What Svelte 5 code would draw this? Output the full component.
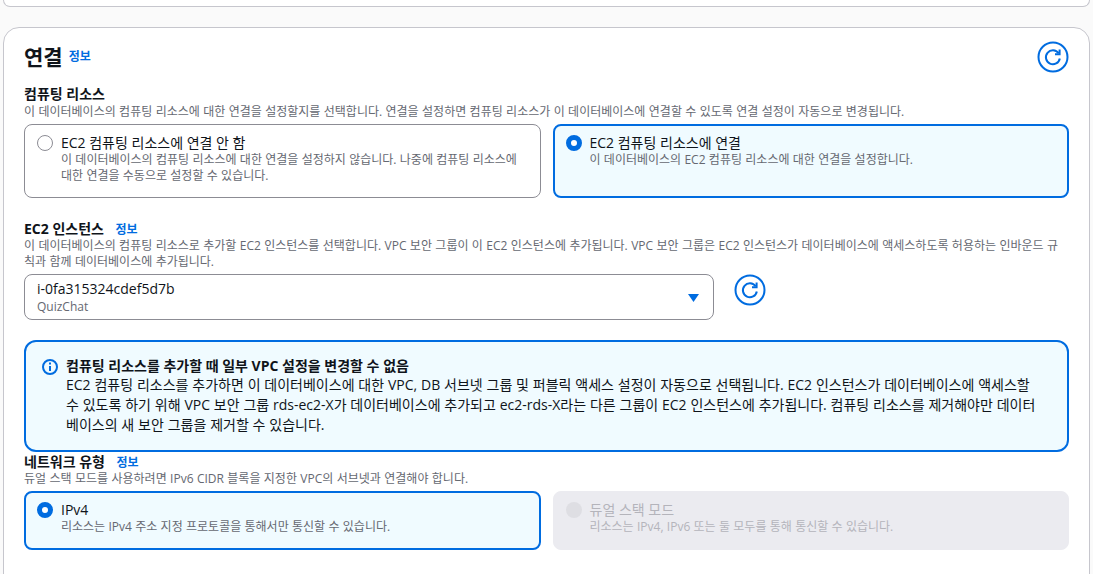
<script lang="ts">
  const computeOptions = [
    {
      label: 'EC2 컴퓨팅 리소스에 연결 안 함',
      desc: '이 데이터베이스의 컴퓨팅 리소스에 대한 연결을 설정하지 않습니다. 나중에 컴퓨팅 리소스에 대한 연결을 수동으로 설정할 수 있습니다.',
      checked: false,
      disabled: false
    },
    {
      label: 'EC2 컴퓨팅 리소스에 연결',
      desc: '이 데이터베이스의 EC2 컴퓨팅 리소스에 대한 연결을 설정합니다.',
      checked: true,
      disabled: false
    }
  ];

  const networkOptions = [
    {
      label: 'IPv4',
      desc: '리소스는 IPv4 주소 지정 프로토콜을 통해서만 통신할 수 있습니다.',
      checked: true,
      disabled: false
    },
    {
      label: '듀얼 스택 모드',
      desc: '리소스는 IPv4, IPv6 또는 둘 모두를 통해 통신할 수 있습니다.',
      checked: false,
      disabled: true
    }
  ];
</script>

{#snippet refresh()}
  <button type="button" class="refresh" aria-label="새로 고침">
    <svg viewBox="0 0 32 32" width="32" height="32" fill="none" stroke="#006ce0" stroke-width="2">
      <circle cx="16" cy="16" r="14.5" />
      <path d="M21.6 12.2a7 7 0 1 0 1.2 5.3" />
      <path d="M22.6 8.6v4.6h-4.6" />
    </svg>
  </button>
{/snippet}

{#snippet tiles(options)}
  <div class="tiles">
    {#each options as opt (opt.label)}
      <div class="tile" class:checked={opt.checked} class:disabled={opt.disabled}>
        <span class="radio"></span>
        <div class="tile-text">
          <div class="tile-label">{opt.label}</div>
          <div class="tile-desc">{opt.desc}</div>
        </div>
      </div>
    {/each}
  </div>
{/snippet}

<div class="page">
  <div class="prev-card"></div>

  <section class="card">
    <header class="card-head">
      <h2>연결</h2>
      <a class="info" href="#top">정보</a>
      <div class="spacer"></div>
      {@render refresh()}
    </header>

    <div class="field compute">
      <div class="field-label">컴퓨팅 리소스</div>
      <div class="field-desc">이 데이터베이스의 컴퓨팅 리소스에 대한 연결을 설정할지를 선택합니다. 연결을 설정하면 컴퓨팅 리소스가 이 데이터베이스에 연결할 수 있도록 연결 설정이 자동으로 변경됩니다.</div>
      {@render tiles(computeOptions)}
    </div>

    <div class="field instance">
      <div class="field-label">EC2 인스턴스 <a class="info gap" href="#top">정보</a></div>
      <div class="field-desc">이 데이터베이스의 컴퓨팅 리소스로 추가할 EC2 인스턴스를 선택합니다. VPC 보안 그룹이 이 EC2 인스턴스에 추가됩니다. VPC 보안 그룹은 EC2 인스턴스가 데이터베이스에 액세스하도록 허용하는 인바운드 규칙과 함께 데이터베이스에 추가됩니다.</div>
      <div class="select-row">
        <div class="select">
          <div class="select-value">
            <div class="select-id">i-0fa315324cdef5d7b</div>
            <div class="select-name">QuizChat</div>
          </div>
          <svg class="caret" viewBox="0 0 11 8" width="11" height="8"><path d="M0 0h11L5.5 8z" fill="#006ce0" /></svg>
        </div>
        {@render refresh()}
      </div>
    </div>

    <div class="alert">
      <svg class="alert-icon" viewBox="0 0 16 16" width="16" height="16" fill="none" stroke="#006ce0" stroke-width="2">
        <circle cx="8" cy="8" r="7" />
        <path d="M8 7v5" />
        <path d="M8 3.6v2" />
      </svg>
      <div class="alert-body">
        <div class="alert-title">컴퓨팅 리소스를 추가할 때 일부 VPC 설정을 변경할 수 없음</div>
        <div class="alert-text">EC2 컴퓨팅 리소스를 추가하면 이 데이터베이스에 대한 VPC, DB 서브넷 그룹 및 퍼블릭 액세스 설정이 자동으로 선택됩니다. EC2 인스턴스가 데이터베이스에 액세스할 수 있도록 하기 위해 VPC 보안 그룹 rds-ec2-X가 데이터베이스에 추가되고 ec2-rds-X라는 다른 그룹이 EC2 인스턴스에 추가됩니다. 컴퓨팅 리소스를 제거해야만 데이터베이스의 새 보안 그룹을 제거할 수 있습니다.</div>
      </div>
    </div>

    <div class="field network">
      <div class="field-label">네트워크 유형 <a class="info gap" href="#top">정보</a></div>
      <div class="field-desc">듀얼 스택 모드를 사용하려면 IPv6 CIDR 블록을 지정한 VPC의 서브넷과 연결해야 합니다.</div>
      {@render tiles(networkOptions)}
    </div>
  </section>
</div>

<style>
  :global(body) {
    margin: 0;
    background: #fafafa;
  }

  .page {
    height: 574px;
    overflow: hidden;
    padding: 0 3px;
    box-sizing: border-box;
    font-family: 'Open Sans', 'Noto Sans CJK KR', sans-serif;
    font-size: 14px;
    line-height: 20px;
    color: #0f141a;
  }

  .prev-card {
    height: 6px;
    border: 1px solid #c6c6cd;
    border-top: 0;
    border-radius: 0 0 16px 16px;
    background: #fff;
  }

  .card {
    margin-top: 20px;
    padding: 12px 20px 60px;
    border: 1px solid #c6c6cd;
    border-radius: 16px;
    background: #fff;
  }

  .card-head {
    display: flex;
    align-items: center;
    height: 34px;
    margin-bottom: 10px;
  }

  h2 {
    margin: 0;
    font-size: 21px;
    line-height: 24px;
    font-weight: 700;
  }

  .info {
    margin-left: 6px;
    font-size: 12px;
    line-height: 16px;
    font-weight: 700;
    color: #006ce0;
    text-decoration: none;
  }

  .info.gap {
    margin-left: 8px;
  }

  .spacer {
    flex: 1;
  }

  .refresh {
    display: block;
    width: 32px;
    height: 32px;
    padding: 0;
    border: 0;
    background: none;
  }

  .field-label {
    font-size: 14px;
    line-height: 18px;
    font-weight: 700;
  }

  .compute .field-label {
    line-height: 20px;
  }

  .field-desc {
    font-size: 12px;
    line-height: 16px;
    word-spacing: 0.28px;
    color: #656871;
  }

  .instance .field-desc {
    padding-right: 8px;
  }

  .tiles {
    display: grid;
    grid-template-columns: 1fr 1fr;
    gap: 12px;
    margin-top: 4px;
  }

  .tile {
    display: flex;
    gap: 8px;
    padding: 8px 12px;
    border: 1px solid #8c8c94;
    border-radius: 8px;
  }

  .tile.checked {
    border: 2px solid #006ce0;
    padding: 7px 11px;
    background: #f0fbff;
  }

  .tile.disabled {
    border-color: #ebebf0;
    background: #ebebf0;
    color: #b4b4bb;
  }

  .radio {
    flex: none;
    box-sizing: border-box;
    width: 16px;
    height: 16px;
    margin-top: 2px;
    border: 1px solid #8c8c94;
    border-radius: 50%;
    background: #fff;
  }

  .checked .radio {
    border: 5px solid #006ce0;
  }

  .disabled .radio {
    border: 0;
    background: #dedee3;
  }

  .tile-label {
    font-size: 14px;
    line-height: 19px;
  }

  .tile-desc {
    font-size: 12px;
    line-height: 16px;
    word-spacing: 0.2px;
    color: #656871;
  }

  .disabled .tile-desc {
    color: #b4b4bb;
  }

  .compute .tile {
    min-height: 56px;
  }

  .network .tile {
    min-height: 41px;
  }

  .instance {
    margin-top: 22px;
  }

  .select-row {
    display: flex;
    gap: 20px;
    margin-top: 4px;
  }

  .select {
    display: flex;
    align-items: center;
    justify-content: space-between;
    box-sizing: border-box;
    width: 690px;
    height: 46px;
    padding: 0 12px;
    border: 1px solid #8c8c94;
    border-radius: 8px;
  }

  .select-id {
    font-size: 14px;
    line-height: 20px;
  }

  .select-name {
    font-size: 12px;
    line-height: 16px;
    color: #656871;
  }

  .caret {
    margin: 2px 2px 0 0;
  }

  .alert {
    display: flex;
    gap: 8px;
    margin-top: 20px;
    padding: 15px 28px 15px 16px;
    border: 2px solid #006ce0;
    border-radius: 12px;
    background: #f0fbff;
  }

  .alert-icon {
    flex: none;
    margin-top: 2px;
  }

  .alert-title {
    font-weight: 700;
    line-height: 18px;
  }

  .alert-text {
    line-height: 20px;
    word-spacing: 0.2px;
  }

  .network {
    margin-top: 1px;
  }
</style>
